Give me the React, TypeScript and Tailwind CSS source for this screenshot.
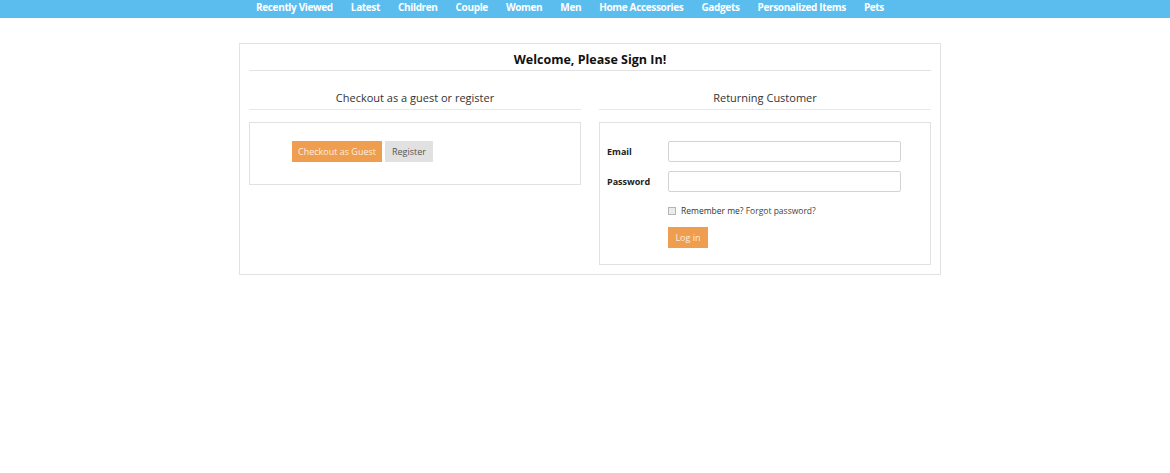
import React from "react";

const navItems = [
  "Recently Viewed",
  "Latest",
  "Children",
  "Couple",
  "Women",
  "Men",
  "Home Accessories",
  "Gadgets",
  "Personalized Items",
  "Pets",
];

export default function App() {
  return (
    <div className="min-h-[473px] bg-white font-['Open_Sans',sans-serif] text-[#333]">
      <nav className="flex h-[18px] items-start justify-center gap-[18px] bg-[#5bbcee] pr-[30px]">
        {navItems.map((item) => (
          <a
            key={item}
            href="#"
            className="text-[10px] font-bold leading-[14px] tracking-[-0.35px] text-white"
          >
            {item}
          </a>
        ))}
      </nav>

      <div className="pl-[10px]">
        <div className="mx-auto mt-[25px] w-[702px] border border-[#e2e2e2] px-[9px] pb-[9px]">
          <div className="flex h-[27px] justify-center border-b border-[#e2e2e2] pt-[7px]">
            <h1 className="text-[12.5px] font-bold leading-[18px] text-[#111]">
              Welcome, Please Sign In!
            </h1>
          </div>

          <div className="flex items-start gap-[18px]">
            <section className="w-[332px]">
              <h2 className="mt-[17px] h-[22px] border-b border-[#e8e8e8] text-center text-[11px] leading-[19px] text-[#333]">
                Checkout as a guest or register
              </h2>
              <div className="mt-[12px] flex h-[63px] gap-[3px] border border-[#e2e2e2] pl-[42px] pt-[18px]">
                <button className="h-[21px] w-[90px] bg-[#ef9d4f] text-[9px] text-[#fdeedd]">
                  Checkout as Guest
                </button>
                <button className="h-[21px] w-[48px] bg-[#e1e1e1] text-[9px] text-[#555]">
                  Register
                </button>
              </div>
            </section>

            <section className="w-[332px]">
              <h2 className="mt-[17px] h-[22px] border-b border-[#e8e8e8] text-center text-[11px] leading-[19px] text-[#333]">
                Returning Customer
              </h2>
              <div className="mt-[12px] flex h-[143px] flex-col border border-[#e2e2e2] pl-[7px] pt-[18px]">
                <div className="flex items-center">
                  <label className="w-[61px] text-[9px] font-bold text-[#222]">Email</label>
                  <input
                    type="text"
                    className="h-[21px] w-[233px] rounded-[2px] border border-[#d3d3d3] bg-white outline-none"
                  />
                </div>
                <div className="mt-[9px] flex items-center">
                  <label className="w-[61px] text-[9px] font-bold text-[#222]">Password</label>
                  <input
                    type="password"
                    className="h-[21px] w-[233px] rounded-[2px] border border-[#d3d3d3] bg-white outline-none"
                  />
                </div>
                <div className="ml-[61px] mt-[13px] flex items-center gap-[5px]">
                  <span className="h-[8px] w-[8px] border border-[#b5b5b5] bg-[#ececec]" />
                  <span className="text-[8.5px] leading-[12px] text-[#333]">
                    Remember me? <a href="#" className="text-[#444]">Forgot password?</a>
                  </span>
                </div>
                <button className="ml-[61px] mt-[10px] h-[21px] w-[40px] bg-[#ef9d4f] text-[9px] text-[#fdeedd]">
                  Log in
                </button>
              </div>
            </section>
          </div>
        </div>
      </div>
    </div>
  );
}
